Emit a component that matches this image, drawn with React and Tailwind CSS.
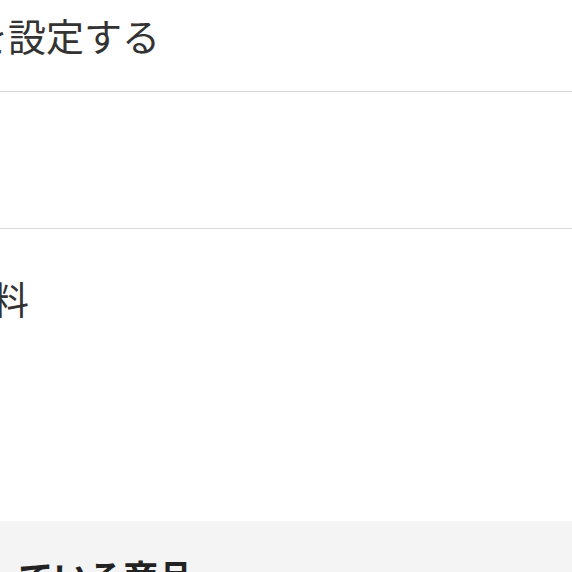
export default function App() {
  const font = { fontFamily: '"Noto Sans CJK JP", "Noto Sans", sans-serif' };
  return (
    <div className="w-[572px] h-[572px] overflow-hidden bg-white" style={font}>
      <div className="h-[92px] border-b border-[#d4d4d4]">
        <div className="ml-[-30px] pt-[16px] text-[38px] leading-[38px] text-[#333333] whitespace-nowrap">
          を設定する
        </div>
      </div>
      <div className="h-[137px] border-b border-[#d9d9d9]" />
      <div className="h-[292px]">
        <div className="ml-[-47px] pt-[50px] text-[38px] leading-[38px] text-[#333333] whitespace-nowrap">
          送料
        </div>
      </div>
      <div className="h-[60px] bg-[#f4f4f4]">
        <div className="ml-[-50px] pt-[37px] text-[35px] leading-[35px] font-bold text-[#222222] whitespace-nowrap">
          持っている商品
        </div>
      </div>
    </div>
  );
}
